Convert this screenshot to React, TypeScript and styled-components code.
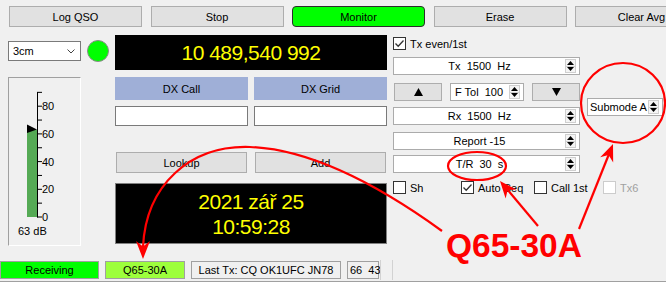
import styled, { createGlobalStyle } from "styled-components";

const GlobalStyle = createGlobalStyle`
  html, body { margin: 0; padding: 0; background: #f0f0f0; }
  body {
    font-family: "Liberation Sans", Arial, sans-serif;
    font-size: 11px;
    color: #000;
  }
  * { box-sizing: border-box; }
`;

// ─── Window ───────────────────────────────────────────────────
const Window = styled.div`
  position: relative;
  width: 666px;
  height: 282px;
  overflow: hidden;
  background: #f0f0f0;
  display: flex;
  flex-direction: column;
`;

const TopBar = styled.div`
  display: flex;
  gap: 8.5px;
  padding: 6px 0 0 9px;
`;

const PushButton = styled.div<{ $w?: number; $h?: number; $on?: boolean }>`
  flex: none;
  width: ${({ $w }) => $w ?? 133}px;
  height: ${({ $h }) => $h ?? 21}px;
  display: flex;
  align-items: center;
  justify-content: center;
  background: ${({ $on }) => ($on ? "#00ff00" : "#e1e1e1")};
  border: 1px solid ${({ $on }) => ($on ? "#2d2d2d" : "#adadad")};
  border-radius: ${({ $on }) => ($on ? "4px" : "0")};
  white-space: nowrap;
`;

const Body = styled.div`
  display: flex;
  gap: 6px;
  padding: 8px 0 0 8px;
`;

// ─── Left column ──────────────────────────────────────────────
const LeftCol = styled.div`
  display: flex;
  flex-direction: column;
  width: 101px;
`;

const ComboRow = styled.div`
  display: flex;
  align-items: center;
  gap: 6px;
  padding-top: 5px;
`;

const Combo = styled.div`
  width: 73px;
  height: 20px;
  display: flex;
  align-items: center;
  justify-content: space-between;
  padding: 0 5px 0 4px;
  background: #fff;
  border: 1px solid #7a7a7a;
`;

const Led = styled.div`
  width: 22px;
  height: 22px;
  border-radius: 50%;
  background: #00ff00;
  border: 1px solid #8a8a8a;
`;

const Meter = styled.div`
  margin-top: 15px;
  width: 73px;
  height: 169px;
  border-top: 1px solid #a0a0a0;
  border-left: 1px solid #a0a0a0;
  border-right: 1px solid #fff;
  border-bottom: 1px solid #fff;
`;

// ─── Centre column ────────────────────────────────────────────
const CenterCol = styled.div`
  display: flex;
  flex-direction: column;
  width: 272px;
`;

const Display = styled.div<{ $h: number; $mt?: number; $framed?: boolean }>`
  height: ${({ $h }) => $h}px;
  margin-top: ${({ $mt }) => $mt ?? 0}px;
  background: #000;
  border: ${({ $framed }) => ($framed ? "1px solid #808080" : "none")};
  color: #ffff00;
  font-size: 21px;
  letter-spacing: -0.5px;
  line-height: 25px;
  display: flex;
  flex-direction: column;
  align-items: center;
  justify-content: center;
`;

const PairRow = styled.div<{ $mt: number; $gap?: number; $pad?: number }>`
  display: flex;
  gap: ${({ $gap }) => $gap ?? 6}px;
  margin-top: ${({ $mt }) => $mt}px;
  padding: 0 ${({ $pad }) => $pad ?? 0}px;
`;

const HeaderCell = styled.div`
  width: 133px;
  height: 23px;
  background: #9fafd7;
  display: flex;
  align-items: center;
  justify-content: center;
`;

const TextInput = styled.div`
  width: 133px;
  height: 20px;
  background: #fff;
  border: 1px solid #7a7a7a;
`;

// ─── Right column ─────────────────────────────────────────────
const RightCol = styled.div`
  display: flex;
  flex-direction: column;
  width: 187px;
  padding-top: 2px;
`;

const CheckItem = styled.label<{ $disabled?: boolean }>`
  display: flex;
  align-items: center;
  gap: 4px;
  height: 13px;
  color: ${({ $disabled }) => ($disabled ? "#a0a0a0" : "#000")};
  white-space: nowrap;
`;

const CheckBox = styled.span<{ $disabled?: boolean }>`
  flex: none;
  width: 13px;
  height: 13px;
  background: #fff;
  border: 1px solid ${({ $disabled }) => ($disabled ? "#cccccc" : "#333333")};
  display: flex;
  align-items: center;
  justify-content: center;
`;

const CheckRow = styled.div<{ $mt: number }>`
  display: grid;
  grid-template-columns: 68px 73px 69px auto;
  margin-top: ${({ $mt }) => $mt}px;
`;

const Spin = styled.div<{ $w?: number; $mt?: number; $pl?: number }>`
  flex: none;
  width: ${({ $w }) => ($w ? `${$w}px` : "100%")};
  height: 18px;
  margin-top: ${({ $mt }) => $mt ?? 0}px;
  display: flex;
  align-items: center;
  padding: 0 3px 0 ${({ $pl }) => $pl ?? 0}px;
  background: #fff;
  border: 1px solid #ababab;
`;

const SpinText = styled.span<{ $left?: boolean }>`
  flex: 1;
  text-align: ${({ $left }) => ($left ? "left" : "center")};
  white-space: pre;
`;

const SpinArrows = styled.div`
  flex: none;
  width: 11px;
  height: 14px;
  display: flex;
  flex-direction: column;
  border: 1px solid #cfcfcf;
  background: #f4f4f4;
`;

const SpinBtn = styled.div<{ $lower?: boolean }>`
  flex: 1;
  display: flex;
  align-items: center;
  justify-content: center;
  border-top: ${({ $lower }) => ($lower ? "1px solid #cfcfcf" : "none")};
`;

const TolRow = styled.div`
  display: flex;
  justify-content: space-between;
  align-items: center;
  margin-top: 8px;
  padding-left: 1px;
`;

const SubmodeCol = styled.div`
  margin-left: 1px;
  padding-top: 63px;
`;

// ─── Status bar ───────────────────────────────────────────────
const StatusBar = styled.div`
  margin-top: auto;
  height: 24px;
  padding-top: 3px;
  display: flex;
  align-items: flex-start;
  border-bottom: 1px solid #a0a0a0;
`;

const StatusCell = styled.div<{ $w: number; $ml?: number; $bg?: string; $left?: boolean }>`
  width: ${({ $w }) => $w}px;
  height: 18px;
  margin-left: ${({ $ml }) => $ml ?? 0}px;
  background: ${({ $bg }) => $bg ?? "transparent"};
  border: 1px solid #a0a0a0;
  display: flex;
  align-items: center;
  justify-content: ${({ $left }) => ($left ? "flex-start" : "center")};
  padding: 0 2px;
  white-space: pre;
`;

const StatusSep = styled.div<{ $ml: number }>`
  width: 1px;
  height: 20px;
  margin-left: ${({ $ml }) => $ml}px;
  margin-top: -1px;
  background: #d2d2d2;
`;

// ─── Annotation overlay ───────────────────────────────────────
const Overlay = styled.svg`
  position: absolute;
  left: 0;
  top: 0;
  pointer-events: none;
`;

const CalloutText = styled.text`
  font-family: "Liberation Sans", Arial, sans-serif;
  font-weight: 700;
  font-size: 33.5px;
  fill: #ff0000;
`;

const Up = () => (
  <svg width="7" height="4" viewBox="0 0 7 4">
    <polygon points="0,4 3.5,0 7,4" fill="#000" />
  </svg>
);
const Down = () => (
  <svg width="7" height="4" viewBox="0 0 7 4">
    <polygon points="0,0 7,0 3.5,4" fill="#000" />
  </svg>
);

const SpinButtons = () => (
  <SpinArrows>
    <SpinBtn>
      <Up />
    </SpinBtn>
    <SpinBtn $lower>
      <Down />
    </SpinBtn>
  </SpinArrows>
);

const Check = ({ label, checked, disabled }: { label: string; checked?: boolean; disabled?: boolean }) => (
  <CheckItem $disabled={disabled}>
    <CheckBox $disabled={disabled}>
      {checked && (
        <svg width="11" height="11" viewBox="0 0 11 11">
          <polyline points="1.5,5.5 4.2,8.3 9.5,2.5" fill="none" stroke="#333" strokeWidth="1.3" />
        </svg>
      )}
    </CheckBox>
    {label}
  </CheckItem>
);

// arrow head with a notched back: tip, wing, notch, wing
function head(tx: number, ty: number, fx: number, fy: number, len = 17, half = 7) {
  const d = Math.hypot(tx - fx, ty - fy);
  const ux = (tx - fx) / d;
  const uy = (ty - fy) / d;
  const bx = tx - ux * len;
  const by = ty - uy * len;
  const nx = tx - ux * len * 0.7;
  const ny = ty - uy * len * 0.7;
  return `${tx},${ty} ${bx - uy * half},${by + ux * half} ${nx},${ny} ${bx + uy * half},${by - ux * half}`;
}

const TICK_STEP = 13.85;

export default function App() {
  return (
    <Window>
      <GlobalStyle />
      <TopBar>
        <PushButton>Log QSO</PushButton>
        <PushButton>Stop</PushButton>
        <PushButton $on>Monitor</PushButton>
        <PushButton>Erase</PushButton>
        <PushButton>Clear Avg</PushButton>
      </TopBar>

      <Body>
        {/* band selector + signal meter */}
        <LeftCol>
          <ComboRow>
            <Combo>
              <span>3cm</span>
              <svg width="8" height="5" viewBox="0 0 8 5">
                <polyline points="0.5,0.5 4,4 7.5,0.5" fill="none" stroke="#444" strokeWidth="1" />
              </svg>
            </Combo>
            <Led />
          </ComboRow>
          <Meter>
            <svg width="71" height="167" viewBox="0 0 71 167">
              <rect x="18" y={139 - 63 * 1.385} width="10" height={63 * 1.385} fill="#55aa55" />
              <polygon points="18,46.5 28,51.5 18,55" fill="#000" />
              <line x1="28.5" y1="14" x2="28.5" y2="139.5" stroke="#000" strokeWidth="1" />
              {Array.from({ length: 10 }).map((_, k) => {
                const y = 139 - k * TICK_STEP;
                return (
                  <g key={k}>
                    <line x1="28" y1={y} x2="33" y2={y} stroke="#000" strokeWidth="1" />
                    {k % 2 === 0 && (
                      <text x="33" y={y + 4} fontSize="11" fontFamily="Liberation Sans, Arial, sans-serif">
                        {k * 10}
                      </text>
                    )}
                  </g>
                );
              })}
              <text x="9" y="157" fontSize="11" fontFamily="Liberation Sans, Arial, sans-serif">
                63 dB
              </text>
            </svg>
          </Meter>
        </LeftCol>

        {/* frequency, DX fields, clock */}
        <CenterCol>
          <Display $h={35}>10 489,540 992</Display>
          <PairRow $mt={7}>
            <HeaderCell>DX Call</HeaderCell>
            <HeaderCell>DX Grid</HeaderCell>
          </PairRow>
          <PairRow $mt={6}>
            <TextInput />
            <TextInput />
          </PairRow>
          <PairRow $mt={26} $gap={8} $pad={1}>
            <PushButton $w={131}>Lookup</PushButton>
            <PushButton $w={131}>Add</PushButton>
          </PairRow>
          <Display $h={61} $mt={10} $framed>
            <span>2021 zář 25</span>
            <span>10:59:28</span>
          </Display>
        </CenterCol>

        {/* tx/rx controls */}
        <RightCol>
          <Check label="Tx even/1st" checked />
          <Spin $mt={7}>
            <SpinText>{"Tx  1500  Hz"}</SpinText>
            <SpinButtons />
          </Spin>
          <TolRow>
            <PushButton $w={48} $h={18}>
              <svg width="9" height="8" viewBox="0 0 9 8">
                <polygon points="0,8 4.5,0 9,8" fill="#000" />
              </svg>
            </PushButton>
            <Spin $w={74} $pl={4}>
              <SpinText $left>{"F Tol  100"}</SpinText>
              <SpinButtons />
            </Spin>
            <PushButton $w={48} $h={18}>
              <svg width="9" height="8" viewBox="0 0 9 8">
                <polygon points="0,0 9,0 4.5,8" fill="#000" />
              </svg>
            </PushButton>
          </TolRow>
          <Spin $mt={6}>
            <SpinText>{"Rx  1500  Hz"}</SpinText>
            <SpinButtons />
          </Spin>
          <Spin $mt={7}>
            <SpinText>Report -15</SpinText>
            <SpinButtons />
          </Spin>
          <Spin $mt={5}>
            <SpinText>{"T/R  30  s"}</SpinText>
            <SpinButtons />
          </Spin>
          <CheckRow $mt={8}>
            <Check label="Sh" />
            <Check label="Auto Seq" checked />
            <Check label="Call 1st" />
            <Check label="Tx6" disabled />
          </CheckRow>
        </RightCol>

        <SubmodeCol>
          <Spin $w={76} $pl={2}>
            <SpinText $left>Submode A</SpinText>
            <SpinButtons />
          </Spin>
        </SubmodeCol>
      </Body>

      <StatusBar>
        <StatusCell $w={99} $bg="#00ff00">Receiving</StatusCell>
        <StatusCell $w={80} $ml={6} $bg="#9dff3c">Q65-30A</StatusCell>
        <StatusCell $w={150} $ml={6}>Last Tx: CQ OK1UFC JN78</StatusCell>
        <StatusCell $w={32} $ml={6} $left>{"66  43"}</StatusCell>
        <StatusSep $ml={1} />
        <StatusSep $ml={11} />
      </StatusBar>

      {/* red callouts drawn over the window */}
      <Overlay width="666" height="282" viewBox="0 0 666 282">
        <g fill="none" stroke="#ff0000" strokeWidth="2.2">
          <ellipse cx="623" cy="103" rx="42" ry="40" />
          <ellipse cx="477" cy="166" rx="29" ry="14" />
          <path d="M 442 231 Q 330 150 250 147 C 190 145 146 185 143 247" />
          <line x1="538" y1="226" x2="507" y2="189" />
          <line x1="579" y1="229" x2="609" y2="154" />
        </g>
        <g fill="#ff0000">
          <polygon points={head(143, 259, 143, 235, 18, 7)} />
          <polygon points={head(500, 181, 538, 226)} />
          <polygon points={head(613, 144, 579, 229)} />
        </g>
        <CalloutText x="446" y="257">Q65-30A</CalloutText>
      </Overlay>
    </Window>
  );
}
